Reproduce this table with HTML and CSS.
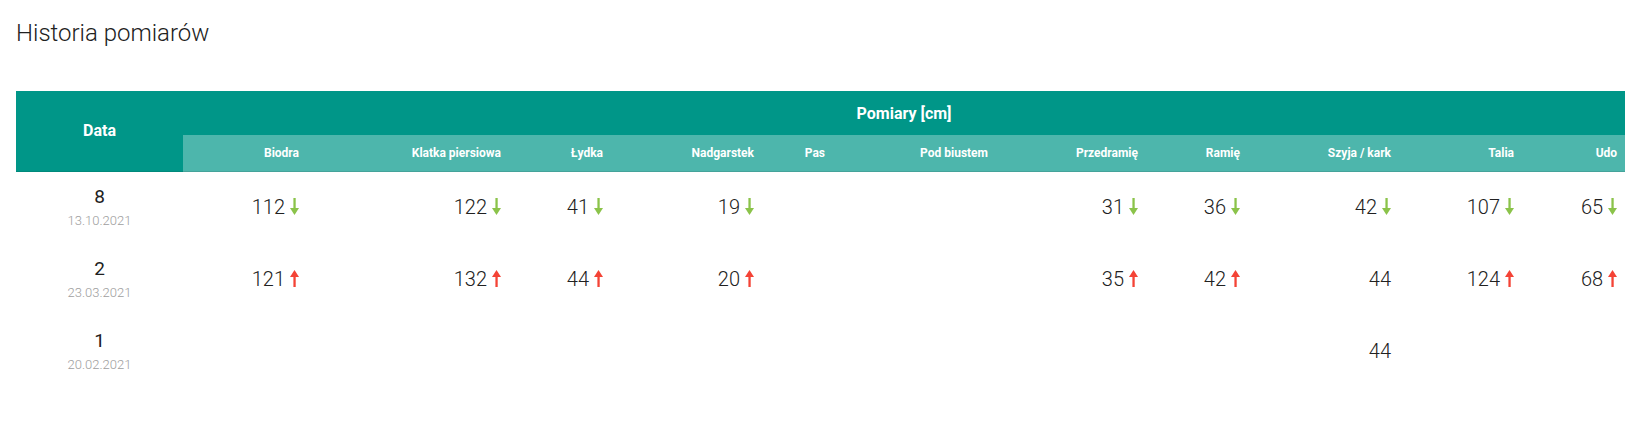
FILE: index.html
```html
<!DOCTYPE html>
<html lang="pl">
<head>
<meta charset="utf-8">
<title>Historia pomiarów</title>
<link rel="stylesheet" href="styles.css">
</head>
<body>
<div class="page">
  <h1 class="title">Historia pomiarów</h1>
  <table class="mtable">
    <colgroup>
      <col class="c-data">
      <col class="c-biodra">
      <col class="c-klatka">
      <col class="c-lydka">
      <col class="c-nadg">
      <col class="c-pas">
      <col class="c-pod">
      <col class="c-przed">
      <col class="c-ramie">
      <col class="c-szyja">
      <col class="c-talia">
      <col class="c-udo">
    </colgroup>
    <thead>
      <tr class="head-top">
        <th class="th-data" rowspan="2">Data</th>
        <th class="th-group" colspan="11">Pomiary [cm]</th>
      </tr>
      <tr class="head-sub">
        <th>Biodra</th>
        <th>Klatka piersiowa</th>
        <th>Łydka</th>
        <th>Nadgarstek</th>
        <th>Pas</th>
        <th>Pod biustem</th>
        <th>Przedramię</th>
        <th>Ramię</th>
        <th>Szyja / kark</th>
        <th>Talia</th>
        <th>Udo</th>
      </tr>
    </thead>
    <tbody>
      <tr>
        <td class="date-cell"><div class="num">8</div><div class="date">13.10.2021</div></td>
        <td class="val">112<span class="arr down"><svg viewBox="0 0 9 17"><rect x="3.4" y="0" width="2.3" height="12"/><polygon points="0,10 9,10 4.5,17"/></svg></span></td>
        <td class="val">122<span class="arr down"><svg viewBox="0 0 9 17"><rect x="3.4" y="0" width="2.3" height="12"/><polygon points="0,10 9,10 4.5,17"/></svg></span></td>
        <td class="val">41<span class="arr down"><svg viewBox="0 0 9 17"><rect x="3.4" y="0" width="2.3" height="12"/><polygon points="0,10 9,10 4.5,17"/></svg></span></td>
        <td class="val">19<span class="arr down"><svg viewBox="0 0 9 17"><rect x="3.4" y="0" width="2.3" height="12"/><polygon points="0,10 9,10 4.5,17"/></svg></span></td>
        <td class="val"></td>
        <td class="val"></td>
        <td class="val">31<span class="arr down"><svg viewBox="0 0 9 17"><rect x="3.4" y="0" width="2.3" height="12"/><polygon points="0,10 9,10 4.5,17"/></svg></span></td>
        <td class="val">36<span class="arr down"><svg viewBox="0 0 9 17"><rect x="3.4" y="0" width="2.3" height="12"/><polygon points="0,10 9,10 4.5,17"/></svg></span></td>
        <td class="val">42<span class="arr down"><svg viewBox="0 0 9 17"><rect x="3.4" y="0" width="2.3" height="12"/><polygon points="0,10 9,10 4.5,17"/></svg></span></td>
        <td class="val">107<span class="arr down"><svg viewBox="0 0 9 17"><rect x="3.4" y="0" width="2.3" height="12"/><polygon points="0,10 9,10 4.5,17"/></svg></span></td>
        <td class="val">65<span class="arr down"><svg viewBox="0 0 9 17"><rect x="3.4" y="0" width="2.3" height="12"/><polygon points="0,10 9,10 4.5,17"/></svg></span></td>
      </tr>
      <tr>
        <td class="date-cell"><div class="num">2</div><div class="date">23.03.2021</div></td>
        <td class="val">121<span class="arr up"><svg viewBox="0 0 9 17"><rect x="3.4" y="5" width="2.3" height="12"/><polygon points="0,7 9,7 4.5,0"/></svg></span></td>
        <td class="val">132<span class="arr up"><svg viewBox="0 0 9 17"><rect x="3.4" y="5" width="2.3" height="12"/><polygon points="0,7 9,7 4.5,0"/></svg></span></td>
        <td class="val">44<span class="arr up"><svg viewBox="0 0 9 17"><rect x="3.4" y="5" width="2.3" height="12"/><polygon points="0,7 9,7 4.5,0"/></svg></span></td>
        <td class="val">20<span class="arr up"><svg viewBox="0 0 9 17"><rect x="3.4" y="5" width="2.3" height="12"/><polygon points="0,7 9,7 4.5,0"/></svg></span></td>
        <td class="val"></td>
        <td class="val"></td>
        <td class="val">35<span class="arr up"><svg viewBox="0 0 9 17"><rect x="3.4" y="5" width="2.3" height="12"/><polygon points="0,7 9,7 4.5,0"/></svg></span></td>
        <td class="val">42<span class="arr up"><svg viewBox="0 0 9 17"><rect x="3.4" y="5" width="2.3" height="12"/><polygon points="0,7 9,7 4.5,0"/></svg></span></td>
        <td class="val">44</td>
        <td class="val">124<span class="arr up"><svg viewBox="0 0 9 17"><rect x="3.4" y="5" width="2.3" height="12"/><polygon points="0,7 9,7 4.5,0"/></svg></span></td>
        <td class="val">68<span class="arr up"><svg viewBox="0 0 9 17"><rect x="3.4" y="5" width="2.3" height="12"/><polygon points="0,7 9,7 4.5,0"/></svg></span></td>
      </tr>
      <tr>
        <td class="date-cell"><div class="num">1</div><div class="date">20.02.2021</div></td>
        <td class="val"></td>
        <td class="val"></td>
        <td class="val"></td>
        <td class="val"></td>
        <td class="val"></td>
        <td class="val"></td>
        <td class="val"></td>
        <td class="val"></td>
        <td class="val">44</td>
        <td class="val"></td>
        <td class="val"></td>
      </tr>
    </tbody>
  </table>
</div>
</body>
</html>
```
FILE: styles.css
```css
html, body {
  margin: 0;
  padding: 0;
  background: #ffffff;
}

body {
  font-family: Roboto, "Liberation Sans", Arial, sans-serif;
  color: rgba(0, 0, 0, 0.87);
}

.page {
  padding: 16px;
}

.title {
  margin: 3px 0 44px 0;
  font-size: 24px;
  font-weight: 300;
  line-height: 28px;
  color: #212121;
}

.mtable {
  width: 100%;
  table-layout: fixed;
  border-collapse: collapse;
  border-spacing: 0;
}

.c-data { width: 167px; }
.c-biodra { width: 124px; }
.c-klatka { width: 202px; }
.c-lydka { width: 102px; }
.c-nadg { width: 151px; }
.c-pas { width: 71px; }
.c-pod { width: 163px; }
.c-przed { width: 150px; }
.c-ramie { width: 102px; }
.c-szyja { width: 151px; }
.c-talia { width: 123px; }
.c-udo { width: 103px; }

.mtable th {
  color: #ffffff;
  padding: 0;
}

.th-data {
  background: #009688;
  font-size: 16px;
  font-weight: 700;
  text-align: center;
  vertical-align: middle;
  border-bottom: 1px solid #00897b;
}

.head-top {
  height: 44px;
}

.th-group {
  background: #009688;
  font-size: 16px;
  font-weight: 700;
  text-align: center;
  vertical-align: middle;
  padding-top: 2px;
}

.head-sub {
  height: 36px;
}

.head-sub th {
  background: #4db6ac;
  font-size: 12px;
  font-weight: 700;
  text-align: right;
  padding-right: 8px;
  vertical-align: middle;
  border-bottom: 1px solid #45a39a;
  white-space: nowrap;
}

.mtable tbody tr {
  height: 72px;
}

.mtable td {
  padding: 0;
  vertical-align: middle;
}

.date-cell {
  text-align: center;
}

.num {
  font-size: 19px;
  font-weight: 400;
  line-height: 24px;
  color: #212121;
}

.date {
  margin-top: 3px;
  font-size: 13px;
  font-weight: 300;
  line-height: 18px;
  color: #9e9e9e;
}

.mtable td.val {
  text-align: right;
  padding-right: 8px;
  font-size: 20px;
  font-weight: 300;
  color: #212121;
  white-space: nowrap;
}

.arr {
  display: inline-block;
  width: 9px;
  height: 17px;
  margin-left: 5px;
  vertical-align: -1px;
}

.arr svg {
  display: block;
  width: 9px;
  height: 17px;
}

.arr.down svg {
  fill: #8bc34a;
}

.arr.up svg {
  fill: #f44336;
}
```
